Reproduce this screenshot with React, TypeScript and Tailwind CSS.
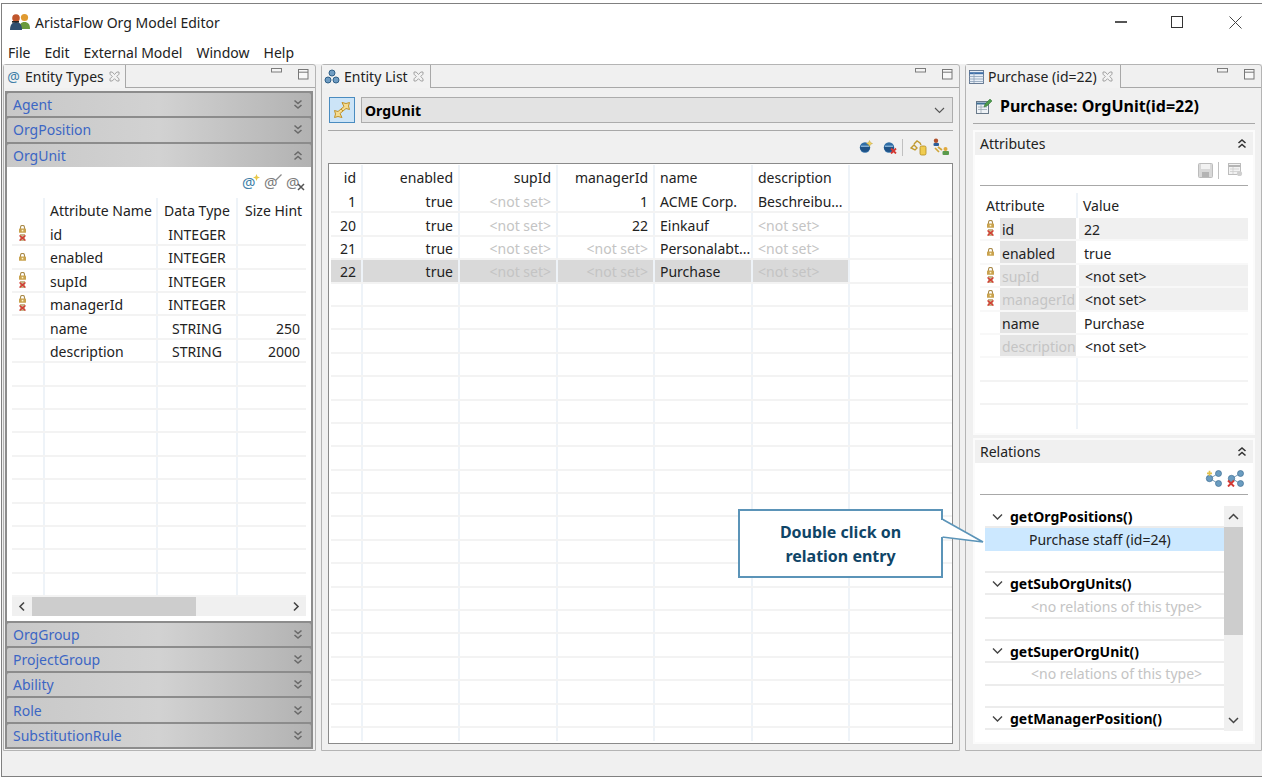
import React from "react";

const F = "font-['Noto_Sans',sans-serif]";

function Logo() {
  return (
    <svg width="21" height="19" viewBox="0 0 21 19">
      <circle cx="14.5" cy="4.5" r="3.6" fill="#e09a30" />
      <path d="M9 16c0-5 2-7 5.5-7s5.5 2 5.5 7z" fill="#6a9a3c" />
      <circle cx="6" cy="5" r="3.8" fill="#c0562c" />
      <path d="M0 17c0-5 2-8 6-8s6 3 6 8z" fill="#2f4f6f" />
      <rect x="2" y="8" width="7" height="1.6" fill="#222" />
    </svg>
  );
}
function CloseX() {
  return (
    <svg width="11" height="11" viewBox="0 0 11 11" fill="none" stroke="#9a9a9a" strokeWidth="0.9">
      <path d="M1 1h2.2l2.3 2.5L7.8 1H10v2.2L7.7 5.5 10 7.8V10H7.8L5.5 7.7 3.2 10H1V7.8l2.3-2.3L1 3.2z" />
    </svg>
  );
}
function MinMax() {
  return (
    <div className="absolute right-[6px] top-[3px] flex items-start gap-[15px]">
      <svg width="12" height="6" viewBox="0 0 12 6" fill="#f4f4f4" stroke="#7c7c7c" strokeWidth="1">
        <rect x="0.5" y="0.5" width="10" height="3.5" />
      </svg>
      <svg width="11" height="11" viewBox="0 0 11 11" fill="#f8f8f8" stroke="#777" strokeWidth="1" className="mt-[1px]">
        <rect x="0.5" y="0.5" width="9.5" height="9.5" />
        <path d="M0.5 3.2h9.5" />
      </svg>
    </div>
  );
}
function DoubleChevron({ up, dark }: { up?: boolean; dark?: boolean }) {
  const c = dark ? "#333" : "#6a6a6a";
  return (
    <svg width="10" height="11" viewBox="0 0 10 11" fill="none" stroke={c} strokeWidth="1.6">
      {up ? (
        <path d="M1.5 5l3.5-3 3.5 3M1.5 9.5l3.5-3 3.5 3" />
      ) : (
        <path d="M1.5 1.5l3.5 3 3.5-3M1.5 6l3.5 3 3.5-3" />
      )}
    </svg>
  );
}
function Lock() {
  return (
    <svg width="9" height="8" viewBox="0 0 9 8">
      <path d="M2.5 4V2.4a2 2 0 0 1 4 0V4" fill="none" stroke="#a98a4a" strokeWidth="1.1" />
      <rect x="1" y="3.6" width="7" height="4.2" rx="0.6" fill="#c9a24e" />
      <rect x="3.7" y="4.8" width="1.6" height="1.6" fill="#fff4c8" />
    </svg>
  );
}
function LockX() {
  return (
    <svg width="9" height="17" viewBox="0 0 9 17">
      <path d="M2.5 4V2.4a2 2 0 0 1 4 0V4" fill="none" stroke="#a98a4a" strokeWidth="1.1" />
      <rect x="1" y="3.6" width="7" height="4.2" rx="0.6" fill="#c9a24e" />
      <rect x="3.7" y="4.8" width="1.6" height="1.6" fill="#fff4c8" />
      <rect x="2" y="9" width="5" height="7" fill="#c8b48a" />
      <path d="M1.5 10.5l6 5M7.5 10.5l-6 5" stroke="#d43a34" strokeWidth="1.5" />
    </svg>
  );
}
function Ball({ mark }: { mark: "star" | "x" }) {
  return (
    <svg width="14" height="14" viewBox="0 0 14 14">
      <circle cx="6" cy="7.5" r="5.2" fill="#2f6da6" />
      <path d="M1 7h10a5 5 0 0 1-10 0z" fill="#1f5286" />
      <path d="M2 6.2h8" stroke="#a8cbe8" strokeWidth="1" />
      {mark === "star" ? (
        <path d="M10.5 0.5l1 2 2 1-2 1-1 2-1-2-2-1 2-1z" fill="#f0d060" stroke="#b99a30" strokeWidth="0.4" />
      ) : (
        <path d="M8 8.5l5 5M13 8.5l-5 5" stroke="#d43a34" strokeWidth="1.8" />
      )}
    </svg>
  );
}
function ChainCyl() {
  return (
    <svg width="18" height="17" viewBox="0 0 18 17" fill="none">
      <path d="M1 9l3-3 3 3-2 2zM4 5l3-3 3 2 1 2" stroke="#c09a30" strokeWidth="1.4" />
      <rect x="10" y="7" width="6" height="9" rx="1.5" fill="#f0cc50" stroke="#b08a20" strokeWidth="0.8" />
    </svg>
  );
}
function ChainPerson() {
  return (
    <svg width="18" height="18" viewBox="0 0 18 18" fill="none">
      <circle cx="4" cy="2.8" r="2.2" fill="#b0502c" />
      <rect x="1.5" y="5" width="5.5" height="3" rx="1" fill="#2f5f9a" />
      <path d="M3 10l4 4M6 9l4 3" stroke="#d0a63a" strokeWidth="1.7" />
      <circle cx="13.5" cy="11" r="2" fill="#e0a83c" />
      <rect x="10.5" y="13" width="6.5" height="4" rx="1" fill="#5a9a4c" />
    </svg>
  );
}
function Nodes({ mark }: { mark: "plus" | "x" }) {
  return (
    <svg width="18" height="17" viewBox="0 0 18 17">
      <path d="M5 8.5L13 3.5M5 8.5l8 5" stroke="#7aa0bc" strokeWidth="1" />
      <circle cx="13.5" cy="3.5" r="3" fill="#6a9cc0" stroke="#3f6f94" strokeWidth="0.7" />
      <circle cx="13.5" cy="13.5" r="3" fill="#6a9cc0" stroke="#3f6f94" strokeWidth="0.7" />
      <circle cx="4.5" cy="8.5" r="3.2" fill="#6a9cc0" stroke="#3f6f94" strokeWidth="0.7" />
      {mark === "plus" ? (
        <path d="M4.5 0.8v5M2 3.3h5" stroke="#e2c04a" strokeWidth="1.7" />
      ) : (
        <path d="M1 10.5l6 6M7 10.5l-6 6" stroke="#d43a34" strokeWidth="1.9" />
      )}
    </svg>
  );
}
function EntityListIcon() {
  return (
    <svg width="16" height="15" viewBox="0 0 16 15" fill="#6f9cc2" stroke="#2e5f88" strokeWidth="1">
      <circle cx="8" cy="4" r="3" />
      <circle cx="4" cy="11" r="3" />
      <circle cx="12" cy="11" r="3" />
    </svg>
  );
}
function TableIcon() {
  return (
    <svg width="15" height="14" viewBox="0 0 15 14" fill="#fff" stroke="#5a6f8a" strokeWidth="0.9">
      <rect x="0.5" y="0.5" width="14" height="13" fill="#e8eef6" />
      <path d="M0.5 3.2h14" stroke="#3f6fa8" strokeWidth="2" />
      <path d="M0.5 6.5h14M0.5 9h14M0.5 11.5h14M5 3v10" stroke="#8aa0b8" strokeWidth="0.8" />
    </svg>
  );
}
function FormIcon() {
  return (
    <svg width="17" height="16" viewBox="0 0 17 16">
      <rect x="0.5" y="3.5" width="12" height="12" fill="#eef2f6" stroke="#6a7a8a" />
      <path d="M0.5 5.5h12" stroke="#3f6f94" strokeWidth="2" />
      <path d="M2 9h9M2 11.5h9M5 7v8" stroke="#9aa8b4" strokeWidth="0.8" />
      <path d="M9 6l5-5 2 2-5 5-3 1z" fill="#4c9a4c" stroke="#2c6c2c" strokeWidth="0.5" />
    </svg>
  );
}
function SaveIcon() {
  return (
    <svg width="15" height="15" viewBox="0 0 15 15">
      <rect x="0.5" y="0.5" width="14" height="14" rx="1" fill="#d8d8d8" stroke="#bcbcbc" />
      <rect x="3" y="1" width="9" height="5" fill="#f2f2f2" />
      <rect x="4" y="9" width="7" height="5" fill="#b4b4b4" />
    </svg>
  );
}
function TableEditIcon() {
  return (
    <svg width="15" height="14" viewBox="0 0 15 14">
      <rect x="0.5" y="0.5" width="12" height="11" fill="#f2f2f2" stroke="#bdbdbd" />
      <path d="M0.5 3h12" stroke="#b4b4b4" strokeWidth="2" />
      <path d="M2 6h9M2 8.5h9M5 4v7" stroke="#cdcdcd" strokeWidth="0.8" />
      <circle cx="11.5" cy="10.5" r="2.6" fill="#cfcfcf" />
    </svg>
  );
}
function SwapIcon() {
  return (
    <svg width="18" height="18" viewBox="0 0 18 18" fill="#f5dc90" stroke="#c0922a" strokeWidth="1">
      <path d="M9 1.5L13 2.5 16.5 1.5 15.5 5 16.5 8.5 13 7.5 10 10 8 8 11 5.5z" />
      <path d="M9 16.5L5 15.5 1.5 16.5 2.5 13 1.5 9.5 5 10.5 8 8 10 10 7 12.5z" />
    </svg>
  );
}
function AtIcon({ badge }: { badge?: "star" | "pen" | "x" }) {
  const color = badge === "star" ? "text-[#3f7fa8]" : "text-[#7c7c7c]";
  return (
    <span className={`relative inline-block w-[16px] h-[16px] text-[15px] leading-[16px] ${color}`}>
      @
      {badge === "star" && (
        <svg width="7" height="7" viewBox="0 0 7 7" className="absolute right-[-2px] top-0">
          <path d="M3.5 0l1 2.5 2.5 1-2.5 1-1 2.5-1-2.5-2.5-1 2.5-1z" fill="#e8c84a" />
        </svg>
      )}
      {badge === "pen" && (
        <svg width="7" height="7" viewBox="0 0 7 7" className="absolute right-[-2px] top-0">
          <path d="M0.5 6.5l6-6" stroke="#8a8a8a" strokeWidth="1.3" />
        </svg>
      )}
      {badge === "x" && (
        <svg width="8" height="8" viewBox="0 0 8 8" className="absolute right-[-3px] bottom-[-1px]">
          <path d="M1 1l6 6M7 1l-6 6" stroke="#555" strokeWidth="1.5" />
        </svg>
      )}
    </span>
  );
}

function Panel({
  className,
  tabW,
  icon,
  title,
  children,
}: {
  className: string;
  tabW: string;
  icon: React.ReactNode;
  title: string;
  children: React.ReactNode;
}) {
  return (
    <div className={`${className} flex flex-col border border-[#b4b4b4] rounded-t-[3px] bg-[#f0f0f0]`}>
      <div className="relative h-[23px] shrink-0 flex border-b border-[#a8a8a8]">
        <div className={`${tabW} h-[23px] flex items-center gap-[4px] pl-[2px] bg-[#f2f2f2] border-r border-[#a8a8a8] text-[14px] text-[#222] z-10`}>
          {icon}
          <span className="whitespace-nowrap">{title}</span>
          <span className="ml-[1px] flex"><CloseX /></span>
        </div>
        <MinMax />
      </div>
      {children}
    </div>
  );
}

function AccHeader({ label, up }: { label: string; up?: boolean }) {
  return (
    <div className="h-[23.3px] shrink-0 mb-[2px] flex items-center justify-between pl-[6px] pr-[8px] rounded-t-[2px] bg-linear-to-r from-[#c8c8c8] via-[#d2d2d2] to-[#b2b2b2] text-[14px] text-[#3c66c4]">
      <span>{label}</span>
      <DoubleChevron up={up} />
    </div>
  );
}

const leftRows: [number, string, string, string][] = [
  [2, "id", "INTEGER", ""],
  [1, "enabled", "INTEGER", ""],
  [2, "supId", "INTEGER", ""],
  [2, "managerId", "INTEGER", ""],
  [0, "name", "STRING", "250"],
  [0, "description", "STRING", "2000"],
];
const V = "border-r-2 border-[#eef3f8]";
const H = "border-b-2 border-[#f3f3f3]";

function LeftTable() {
  const empties = Array.from({ length: 10 });
  return (
    <div className="mx-[5px] flex-1 min-h-0 overflow-hidden text-[14px] text-[#222]">
      <div className="h-[25px] flex items-center">
        <div className={`w-[33px] h-full ${V}`} />
        <div className={`w-[113px] h-full pl-[5px] flex items-center ${V}`}>Attribute Name</div>
        <div className={`w-[80px] h-full pl-[6px] flex items-center ${V}`}>Data Type</div>
        <div className="flex-1 pl-[7px]">Size Hint</div>
      </div>
      {leftRows.map((r) => (
        <div key={r[1]} className={`h-[23.4px] flex items-center ${H}`}>
          <div className={`w-[33px] h-full ${V} flex items-center pl-[6px]`}>
            {r[0] === 2 ? <LockX /> : r[0] === 1 ? <Lock /> : null}
          </div>
          <div className={`w-[113px] h-full pl-[5px] pt-[2px] flex items-center ${V}`}>{r[1]}</div>
          <div className={`w-[80px] h-full pt-[2px] flex items-center justify-center ${V}`}>{r[2]}</div>
          <div className="flex-1 text-right pr-[6px] pt-[2px]">{r[3]}</div>
        </div>
      ))}
      {empties.map((_, i) => (
        <div key={i} className={`h-[23.4px] flex ${H}`}>
          <div className={`w-[33px] h-full ${V}`} />
          <div className={`w-[113px] h-full ${V}`} />
          <div className={`w-[80px] h-full ${V}`} />
        </div>
      ))}
    </div>
  );
}

function LeftPanel() {
  return (
    <Panel
      className="w-[313px] shrink-0"
      tabW="w-[122px]"
      icon={<span className="w-[15px] text-[14px] text-[#3f7fa8] text-center leading-none">@</span>}
      title="Entity Types"
    >
      <div className="flex-1 min-h-0 pt-[3px] pl-[1px] pr-[2px] pb-[1px]">
        <div className="h-full flex flex-col border-2 border-[#8c8c8c] bg-[#8c8c8c]">
          <AccHeader label="Agent" />
          <AccHeader label="OrgPosition" />
          <div className="h-[23.3px] shrink-0 flex items-center justify-between pl-[6px] pr-[8px] rounded-t-[2px] bg-linear-to-r from-[#c8c8c8] via-[#d2d2d2] to-[#b2b2b2] text-[14px] text-[#3c66c4]">
            <span>OrgUnit</span>
            <DoubleChevron up />
          </div>
          <div className="flex-1 min-h-0 mb-[2px] bg-white flex flex-col pb-[5px]">
            <div className="h-[31px] shrink-0 flex items-center justify-end gap-[6px] pr-[9px]">
              <AtIcon badge="star" />
              <AtIcon badge="pen" />
              <AtIcon badge="x" />
            </div>
            <LeftTable />
            <div className="mx-[5px] h-[19px] shrink-0 bg-[#f0f0f0] flex items-center justify-between">
              <div className="flex items-center h-full">
                <svg width="20" height="19" viewBox="0 0 20 19" fill="none" stroke="#444" strokeWidth="1.6"><path d="M12 5.5L8 9.5l4 4" /></svg>
                <div className="w-[164px] h-full bg-[#cdcdcd]" />
              </div>
              <svg width="20" height="19" viewBox="0 0 20 19" fill="none" stroke="#444" strokeWidth="1.6"><path d="M8 5.5l4 4-4 4" /></svg>
            </div>
          </div>
          <AccHeader label="OrgGroup" />
          <AccHeader label="ProjectGroup" />
          <AccHeader label="Ability" />
          <AccHeader label="Role" />
          <div className="h-[23.3px] shrink-0 flex items-center justify-between pl-[6px] pr-[8px] rounded-t-[2px] bg-linear-to-r from-[#c8c8c8] via-[#d2d2d2] to-[#b2b2b2] text-[14px] text-[#3c66c4]">
            <span>SubstitutionRule</span>
            <DoubleChevron />
          </div>
        </div>
      </div>
    </Panel>
  );
}

const NS = "<not set>";
const centerRows = [
  ["1", "true", NS, "1", "ACME Corp.", "Beschreibu..."],
  ["20", "true", NS, "22", "Einkauf", NS],
  ["21", "true", NS, NS, "Personalabt...", NS],
  ["22", "true", NS, NS, "Purchase", NS],
];
const cols = ["w-[32px]", "w-[97px]", "w-[98px]", "w-[97px]", "w-[98px]", "w-[97px]"];

function CenterTable() {
  const heads = ["id", "enabled", "supId", "managerId", "name", "description"];
  return (
    <div className="flex-1 min-h-0 border border-[#8a8a8a] bg-white pl-[2px] pt-[1px] overflow-hidden text-[14px] text-[#222]">
      <div className="h-[25px] flex">
        {heads.map((h, i) => (
          <div key={h} className={`${cols[i]} h-full flex items-center ${V} ${i < 4 ? "justify-end pr-[5px]" : "pl-[5px]"}`}>{h}</div>
        ))}
      </div>
      {centerRows.map((r, ri) => (
        <div key={ri} className={`h-[23.4px] flex ${H}`}>
          {r.map((c, i) => (
            <div
              key={i}
              className={`${cols[i]} h-full pt-[2px] flex items-center whitespace-nowrap ${V} ${i < 4 ? "justify-end pr-[5px]" : "pl-[5px]"} ${ri === 3 ? "bg-[#d9d9d9]" : ""} ${c === NS ? "text-[#c4c4c4]" : ""}`}
            >
              {c}
            </div>
          ))}
        </div>
      ))}
      {Array.from({ length: 19 }).map((_, ri) => (
        <div key={ri} className={`h-[23.4px] flex ${H}`}>
          {cols.map((c, i) => (
            <div key={i} className={`${c} h-full ${V}`} />
          ))}
        </div>
      ))}
      <div className="h-[13px] flex">
        {cols.map((c, i) => (
          <div key={i} className={`${c} h-full ${V}`} />
        ))}
      </div>
    </div>
  );
}

function CenterPanel() {
  return (
    <Panel
      className="w-[639px] shrink-0"
      tabW="w-[109px]"
      icon={<EntityListIcon />}
      title="Entity List"
    >
      <div className="flex-1 min-h-0 flex flex-col px-[6px] pb-[6px]">
        <div className="mt-[9px] h-[26px] shrink-0 flex gap-[6px] pl-[1px]">
          <div className="w-[26px] h-[26px] bg-[#cce4f7] border border-[#4a8cc0] flex items-center justify-center">
            <SwapIcon />
          </div>
          <div className="flex-1 bg-[#e3e3e3] border border-[#acacac] flex items-center justify-between pl-[3px] pr-[7px] font-bold text-[14px] text-black">
            <span>OrgUnit</span>
            <svg width="11" height="7" viewBox="0 0 11 7" fill="none" stroke="#555" strokeWidth="1.1"><path d="M1 1l4.5 4.5L10 1" /></svg>
          </div>
        </div>
        <div className="mt-[7px] h-[1px] shrink-0 bg-[#a8a8a8]" />
        <div className="h-[32px] shrink-0 flex items-center justify-end pr-[3px]">
          <span className="mr-[10px] flex"><Ball mark="star" /></span>
          <span className="mr-[5px] flex"><Ball mark="x" /></span>
          <div className="w-[1px] h-[17px] bg-[#c0c0c0] mr-[7px]" />
          <span className="mr-[4px] flex"><ChainCyl /></span>
          <ChainPerson />
        </div>
        <div className="flex-1 min-h-0 flex flex-col">
          <CenterTable />
        </div>
      </div>
    </Panel>
  );
}

const attrRows: { icon: number; name: string; muted: boolean; value: string; shade: boolean }[] = [
  { icon: 2, name: "id", muted: false, value: "22", shade: true },
  { icon: 1, name: "enabled", muted: false, value: "true", shade: false },
  { icon: 2, name: "supId", muted: true, value: NS, shade: true },
  { icon: 2, name: "managerId", muted: true, value: NS, shade: true },
  { icon: 0, name: "name", muted: false, value: "Purchase", shade: false },
  { icon: 0, name: "description", muted: true, value: NS, shade: false },
];

function SectionHead({ label }: { label: string }) {
  return (
    <div className="h-[23px] shrink-0 bg-[#f0f0f0] flex items-center justify-between pl-[5px] pr-[6px] text-[14px] text-[#222]">
      <span>{label}</span>
      <DoubleChevron up dark />
    </div>
  );
}

function TreeGroup({ name, child, selected }: { name: string; child: string; selected?: boolean }) {
  return (
    <div className="h-[67.4px] flex flex-col shrink-0">
      <div className="h-[22px] shrink-0 pt-[1px] flex items-center border-b-2 border-[#ececec] text-[14px] font-bold text-black">
        <svg width="13" height="8" viewBox="0 0 13 8" fill="none" stroke="#444" strokeWidth="1.4" className="ml-[6px] mr-[6px]">
          <path d="M2 1.5l4.5 4.5L11 1.5" />
        </svg>
        {name}
      </div>
      {selected ? (
        <div className="h-[23.4px] shrink-0 bg-[#cce8ff] flex items-center pl-[44px] text-[14px] text-[#222]">{child}</div>
      ) : (
        <div className="h-[23.4px] shrink-0 flex items-center pl-[46px] text-[14px] text-[#c4c4c4] border-b-2 border-[#ececec]">{child}</div>
      )}
      <div className="flex-1 border-b-2 border-[#ececec]" />
    </div>
  );
}

function RightPanel() {
  return (
    <Panel
      className="flex-1 min-w-0"
      tabW="w-[155px]"
      icon={<span className="ml-[1px] flex"><TableIcon /></span>}
      title="Purchase (id=22)"
    >
      <div className="flex-1 min-h-0 flex flex-col pl-[7px] pr-[6px]">
        <div className="h-[36px] shrink-0 border-b border-[#a8a8a8] flex items-center gap-[7px] pl-[3px] font-bold text-[16px] text-black">
          <FormIcon />
          <span>Purchase: OrgUnit(id=22)</span>
        </div>
        <div className="mt-[6px] h-[305px] shrink-0 border-2 border-[#fbfbfb] bg-white flex flex-col">
          <SectionHead label="Attributes" />
          <div className="mx-[5px] h-[31px] shrink-0 border-b border-[#a8a8a8] flex items-center justify-end pr-[5px]">
            <SaveIcon />
            <div className="w-[1px] h-[17px] bg-[#c0c0c0] ml-[5px] mr-[9px]" />
            <TableEditIcon />
          </div>
          <div className="mx-[5px] text-[14px] text-[#222] overflow-hidden">
            <div className="h-[32px] flex items-end">
              <div className="w-[96px] h-[25px] pl-[6px] flex items-center">Attribute</div>
              <div className={`h-[25px] w-0 ${V}`} />
              <div className="flex-1 h-[25px] pl-[5px] flex items-center">Value</div>
            </div>
            {attrRows.map((r) => (
              <div key={r.name} className="h-[23.4px] flex border-b-2 border-[#f8f8f8]">
                <div className="w-[20px] h-full flex items-center justify-center shrink-0">
                  {r.icon === 2 ? <LockX /> : r.icon === 1 ? <Lock /> : null}
                </div>
                <div className={`w-[76px] h-full bg-[#e4e4e4] pl-[2px] pt-[2px] flex items-center shrink-0 whitespace-nowrap overflow-hidden ${r.muted ? "text-[#c4c4c4]" : ""}`}>{r.name}</div>
                <div className={`ml-[3px] flex-1 h-full pt-[2px] flex items-center ${r.value === NS ? "pl-[6px]" : "pl-[5px]"} ${r.shade ? "bg-[#f0f0f0]" : ""}`}>{r.value}</div>
              </div>
            ))}
            {[0, 1, 2].map((i) => (
              <div key={i} className={`h-[23.4px] flex ${i < 2 ? H : ""}`}>
                <div className={`w-[98px] h-full ${V}`} />
              </div>
            ))}
          </div>
        </div>
        <div className="mt-[3px] h-[306px] shrink-0 border-2 border-[#fbfbfb] bg-white flex flex-col">
          <SectionHead label="Relations" />
          <div className="mx-[5px] h-[32px] shrink-0 border-b border-[#a8a8a8] flex items-center justify-end gap-[4px] pr-[3px]">
            <Nodes mark="plus" />
            <Nodes mark="x" />
          </div>
          <div className="mt-[11px] ml-[10px] mr-[10px] h-[225px] shrink-0 flex">
            <div className="w-[239px] h-full overflow-hidden flex flex-col">
              <TreeGroup name="getOrgPositions()" child="Purchase staff (id=24)" selected />
              <TreeGroup name="getSubOrgUnits()" child="<no relations of this type>" />
              <TreeGroup name="getSuperOrgUnit()" child="<no relations of this type>" />
              <TreeGroup name="getManagerPosition()" child="" />
            </div>
            <div className="w-[19px] h-full bg-[#f0f0f0] flex flex-col items-center justify-between">
              <div className="w-full flex flex-col">
                <div className="h-[21px] flex items-center justify-center">
                  <svg width="11" height="7" viewBox="0 0 11 7" fill="none" stroke="#444" strokeWidth="1.5"><path d="M1 6l4.5-4.5L10 6" /></svg>
                </div>
                <div className="h-[108px] bg-[#cdcdcd]" />
              </div>
              <div className="h-[21px] flex items-center justify-center">
                <svg width="11" height="7" viewBox="0 0 11 7" fill="none" stroke="#444" strokeWidth="1.5"><path d="M1 1l4.5 4.5L10 1" /></svg>
              </div>
            </div>
          </div>
        </div>
      </div>
    </Panel>
  );
}

export default function App() {
  return (
    <div className={`relative w-[1262px] h-[777px] bg-white pt-[3px] pl-[1px] overflow-hidden ${F}`}>
      <div className="h-[774px] flex flex-col border border-r-0 border-[#808080]">
        <div className="h-[36px] shrink-0 flex items-center pl-[8px] bg-white">
          <Logo />
          <span className="ml-[4px] text-[14px] text-[#222]">AristaFlow Org Model Editor</span>
          <div className="ml-auto flex items-center">
            <div className="w-[12px] h-[1.5px] bg-[#555] mr-[44px]" />
            <div className="w-[12px] h-[12px] border border-[#333] mr-[46px]" />
            <svg width="13" height="13" viewBox="0 0 13 13" fill="none" stroke="#444" strokeWidth="1" className="mr-[20px]"><path d="M0.5 0.5l12 12M12.5 0.5l-12 12" /></svg>
          </div>
        </div>
        <div className="h-[24px] shrink-0 flex items-center gap-[14px] pl-[6px] bg-white text-[14px] text-[#222]">
          <span>File</span>
          <span>Edit</span>
          <span>External Model</span>
          <span>Window</span>
          <span>Help</span>
        </div>
        <div className="flex-1 min-h-0 bg-[#f0f0f0] flex flex-col">
          <div className="h-[687px] shrink-0 flex pl-[1px] gap-[5px]">
            <LeftPanel />
            <CenterPanel />
            <RightPanel />
          </div>
        </div>
      </div>
      <div className="absolute left-[738px] top-[509px] w-[205px] h-[69px] bg-white border-2 border-[#5b94b8] flex items-center justify-center text-center text-[16px] leading-[24px] font-bold text-[#0f4567]">
        <span>Double click on<br />relation entry</span>
      </div>
      <svg width="44" height="26" viewBox="0 0 44 26" className="absolute left-[941px] top-[518px]">
        <path d="M1 1L42 24L1 19" fill="#fff" stroke="#5b94b8" strokeWidth="1.6" />
        <rect x="0" y="2" width="1.6" height="17" fill="#fff" />
      </svg>
    </div>
  );
}
